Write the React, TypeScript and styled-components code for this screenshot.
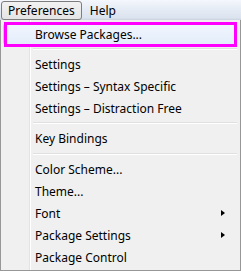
import React from "react";
import styled, { createGlobalStyle } from "styled-components";

const Global = createGlobalStyle`
  html, body { margin: 0; padding: 0; background: #f0f0f0; }
  body { font-family: "Segoe UI", "Noto Sans", "Liberation Sans", sans-serif; font-size: 12px; color: #000; }
`;

const Page = styled.div`
  width: 241px;
  height: 271px;
  display: flex;
  flex-direction: column;
  overflow: hidden;
`;

const MenuBar = styled.div`
  height: 20px;
  display: flex;
  align-items: stretch;
  gap: 1px;
  padding: 1px 0 0 1px;
  box-sizing: border-box;
  background: linear-gradient(#f4f7fc 0%, #e6ecf5 45%, #dbe3ef 90%, #c9d2de 100%);
`;

const BarItem = styled.div<{ $open?: boolean }>`
  display: flex;
  align-items: center;
  padding: 0 6px;
  box-sizing: border-box;
  height: 19px;
  border: 1px solid ${(p) => (p.$open ? "#7d7d7d" : "transparent")};
  border-radius: 3px;
  background: ${(p) =>
    p.$open ? "linear-gradient(#f2f2f2, #e4e4e4)" : "transparent"};
  font-size: 12px;
  line-height: 1;
`;

const Dropdown = styled.div`
  flex: 1;
  position: relative;
  background: #f0f0f0;
  border: 1px solid #979797;
  border-top: none;
  box-sizing: border-box;
  padding: 3px 3px 2px 2px;
  display: flex;
  flex-direction: column;
`;

const Gutter = styled.div`
  position: absolute;
  left: 28px;
  top: 0;
  bottom: 0;
  width: 2px;
  border-left: 1px solid #e2e3e3;
  border-right: 1px solid #ffffff;
  box-sizing: border-box;
`;

const Item = styled.div<{ $hover?: boolean }>`
  position: relative;
  height: 22px;
  flex: none;
  display: flex;
  align-items: center;
  padding-left: 31px;
  box-sizing: border-box;
  border: 1px solid ${(p) => (p.$hover ? "#aecff7" : "transparent")};
  border-radius: 3px;
  background: ${(p) =>
    p.$hover ? "linear-gradient(#f2f7fe, #e3edfb)" : "transparent"};
  white-space: nowrap;
`;

const Highlight = styled.div`
  position: absolute;
  left: 0px;
  top: -2px;
  right: -1px;
  bottom: -3px;
  border: 3px solid #ff00ff;
  pointer-events: none;
`;

const Arrow = styled.span`
  position: absolute;
  right: 11px;
  top: 7px;
  width: 0;
  height: 0;
  border-top: 3.5px solid transparent;
  border-bottom: 3.5px solid transparent;
  border-left: 4px solid #000;
`;

const Separator = styled.div<{ $h?: number }>`
  height: ${(p) => p.$h ?? 9}px;
  flex: none;
  display: flex;
  align-items: center;
  padding-left: 30px;
  &::after {
    content: "";
    flex: 1;
    height: 1px;
    border-bottom: 1px solid #ffffff;
    background: #e0e0e0;
  }
`;

export default function App() {
  return (
    <Page>
      <Global />
      <MenuBar>
        <BarItem $open>Preferences</BarItem>
        <BarItem>Help</BarItem>
      </MenuBar>
      <Dropdown>
        <Gutter />
        <Item $hover>
          Browse Packages...
          <Highlight />
        </Item>
        <Separator $h={8} />
        <Item>Settings</Item>
        <Item>Settings – Syntax Specific</Item>
        <Item>Settings – Distraction Free</Item>
        <Separator $h={8} />
        <Item>Key Bindings</Item>
        <Separator />
        <Item>Color Scheme...</Item>
        <Item>Theme...</Item>
        <Item>
          Font
          <Arrow />
        </Item>
        <Item>
          Package Settings
          <Arrow />
        </Item>
        <Item>Package Control</Item>
      </Dropdown>
    </Page>
  );
}
